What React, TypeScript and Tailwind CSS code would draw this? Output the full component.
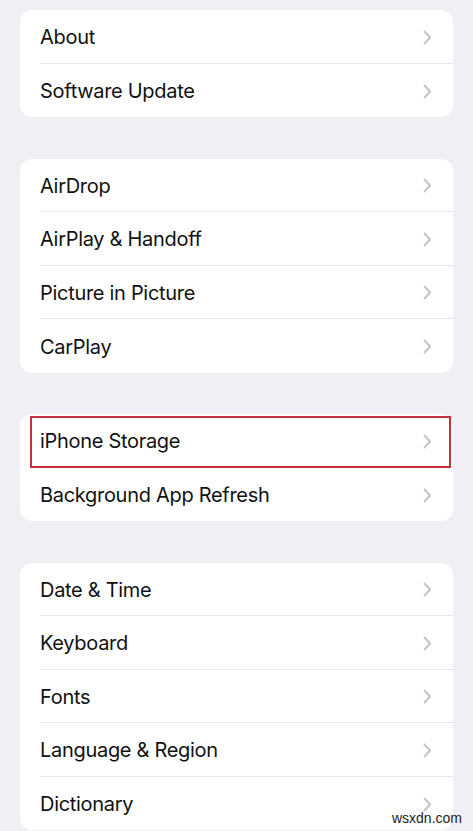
import React from "react";

const groups: string[][] = [
  ["About", "Software Update"],
  ["AirDrop", "AirPlay & Handoff", "Picture in Picture", "CarPlay"],
  ["iPhone Storage", "Background App Refresh"],
  ["Date & Time", "Keyboard", "Fonts", "Language & Region", "Dictionary"],
];

function Chevron() {
  return (
    <svg width="9" height="15" viewBox="0 0 9 15" className="shrink-0">
      <path d="M1.5 1.5 L7 7.5 L1.5 13.5" fill="none" stroke="#c4c4c8" strokeWidth="2" strokeLinecap="round" strokeLinejoin="round" />
    </svg>
  );
}

export default function App() {
  return (
    <div
      className="relative w-[473px] h-[831px] overflow-hidden bg-[#efeff4] pt-[10px] flex flex-col gap-[41.5px]"
      style={{ fontFamily: "Inter, 'Noto Sans', sans-serif" }}
    >
      {groups.map((g, gi) => (
        <div key={gi} className="mx-[20px] bg-white rounded-[12px] pl-[20px] flex flex-col">
          {g.map((item, i) => (
            <div
              key={item}
              className={`relative h-[53.5px] flex items-center pr-[21px] pt-[2px] ${i < g.length - 1 ? "border-b border-[#e6e6ea]" : ""}`}
            >
              <span className="flex-1 text-[20px] text-[#111] tracking-[-0.3px]">{item}</span>
              <Chevron />
              {item === "iPhone Storage" && (
                <div className="absolute left-[-10px] right-[2px] top-[2px] bottom-[-1px] border-2 border-[#c8303c] pointer-events-none" />
              )}
            </div>
          ))}
        </div>
      ))}
      <div className="absolute right-[11px] bottom-[2px] text-[14px] text-[#222]" style={{ fontFamily: "'Liberation Sans', sans-serif" }}>
        wsxdn.com
      </div>
    </div>
  );
}
